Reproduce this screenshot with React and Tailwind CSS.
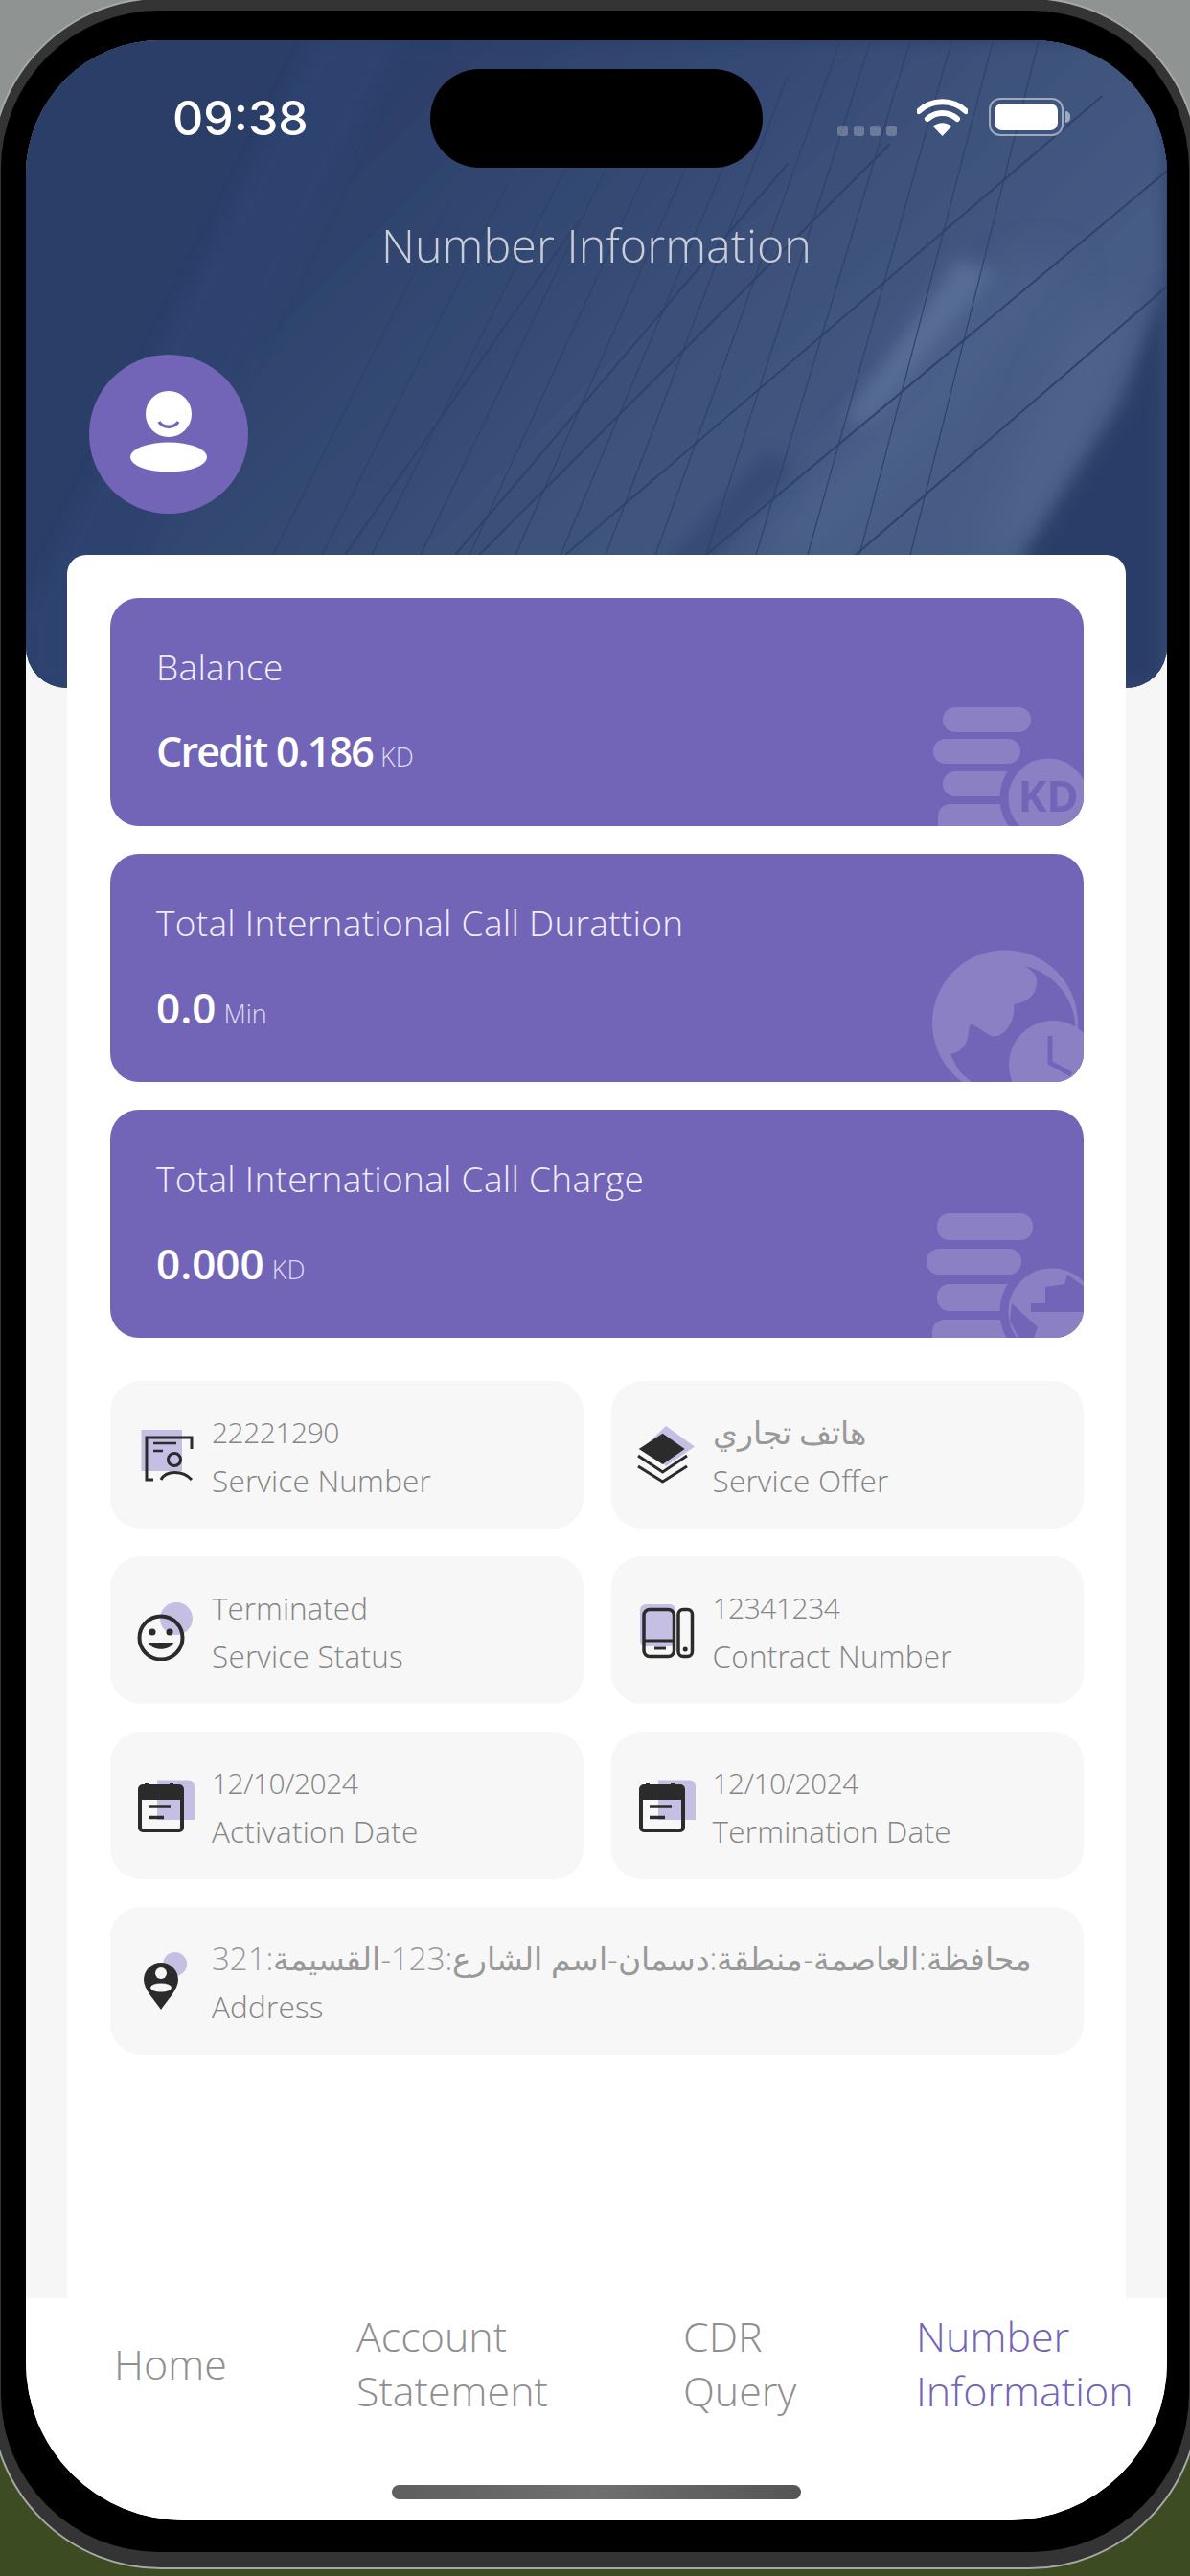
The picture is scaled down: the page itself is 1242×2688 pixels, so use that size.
const LILAC = "#c5bfe3";
const INK = "#2b2b2b";
const CARD_LIGHT = "#8c80c5";
const CARD_BG = "#7265b8";

// steep lines of the building facade, [x at y=579, slope, top y]
const thinLines = [
  [285, 0.5, 210], [336, 0.5, 190], [388, 0.5, 175], [439, 0.48, 165], [490, 0.46, 150], [538, 0.44, 130], [585, 0.42, 110],
  [632, 0.38, 80], [684, 0.36, 42], [737, 0.32, 42], [789, 0.3, 42], [843, 0.28, 42], [897, 0.26, 42], [950, 0.25, 42],
];
const thickLines = [
  [360, 0.7, 230], [475, 0.85, 170], [500, 1.0, 150], [590, 1.17, 100], [737, 1.2, 42], [893, 1.16, 42],
];

function HeaderBackdrop() {
  return (
    <svg className="absolute inset-0 h-full w-full" viewBox="27 42 1191 676" preserveAspectRatio="none">
      <defs>
        <linearGradient id="bgGrad" gradientUnits="userSpaceOnUse" x1="400" y1="60" x2="900" y2="560">
          <stop offset="0" stopColor="#2b3f69" />
          <stop offset="0.35" stopColor="#334872" />
          <stop offset="0.6" stopColor="#3b5079" />
          <stop offset="1" stopColor="#465c85" />
        </linearGradient>
        <filter id="soft" x="-30%" y="-30%" width="160%" height="160%">
          <feGaussianBlur stdDeviation="22" />
        </filter>
        <filter id="softer" x="-30%" y="-30%" width="160%" height="160%">
          <feGaussianBlur stdDeviation="9" />
        </filter>
      </defs>
      <rect x="27" y="42" width="1191" height="676" fill="#2a3e68" />
      <polygon points="60,718 420,42 1218,42 1218,718" fill="url(#bgGrad)" filter="url(#softer)" />
      <polygon points="27,718 27,640 330,42 420,42 90,718" fill="#2e4370" filter="url(#softer)" />
      <polygon points="1070,270 1120,280 860,579 790,579" fill="#4c628b" filter="url(#soft)" />
      <polygon points="1000,270 1040,285 910,440 880,440" fill="#566d95" filter="url(#softer)" />
      <polygon points="1130,330 1190,330 1090,579 1020,579" fill="#4e648c" filter="url(#soft)" />
      <polygon points="800,470 830,490 730,600 680,600" fill="#364b74" filter="url(#softer)" />
      <polygon points="1218,290 1218,720 1040,720 1070,575 1170,420" fill="#2a3d67" filter="url(#softer)" />
      {thinLines.map(([x, s, top]) => (
        <line key={x} x1={x} y1="579" x2={x + s * (579 - top)} y2={top} stroke="#2e426c" strokeWidth="1.2" />
      ))}
      {thickLines.map(([x, s, top]) => (
        <line key={x} x1={x} y1="579" x2={x + s * (579 - top)} y2={top} stroke="#2e426c" strokeWidth="2" />
      ))}
    </svg>
  );
}

function CoinsIcon() {
  return (
    <svg className="absolute bottom-0 right-0 h-[130px] w-[160px]" viewBox="0 0 160 130">
      <rect x="13" y="6" width="92" height="26" rx="13" fill={CARD_LIGHT} />
      <rect x="3" y="39" width="91" height="26" rx="13" fill={CARD_LIGHT} />
      <rect x="13" y="73" width="90" height="26" rx="13" fill={CARD_LIGHT} />
      <rect x="8" y="107" width="90" height="36" rx="13" fill={CARD_LIGHT} />
      <circle cx="123" cy="101" r="46" fill={CARD_LIGHT} stroke={CARD_BG} strokeWidth="9" />
      <text x="123" y="115" textAnchor="middle" fontSize="45" fontWeight="700" fill={CARD_BG} fontFamily="'Open Sans', sans-serif">KD</text>
    </svg>
  );
}

function GlobeClockIcon() {
  return (
    <svg className="absolute bottom-0 right-0 h-[150px] w-[180px]" viewBox="0 0 180 150">
      <circle cx="98" cy="88.5" r="76" fill={CARD_LIGHT} />
      <path
        d="M118 29C128 34 134 42 130 52C128 62 118 67 107 69C109 82 102 98 90 102C80 104 72 92 62 90C58 94 64 116 41 121C46 132 50 140 57 145A68 68 0 1 0 118 29Z"
        fill={CARD_BG}
      />
      <circle cx="148" cy="132" r="46" fill={CARD_LIGHT} />
      <path d="M145 102V130L167 142" fill="none" stroke={CARD_BG} strokeWidth="5" />
    </svg>
  );
}

function CoinsGlobeIcon() {
  return (
    <svg className="absolute bottom-0 right-0 h-[150px] w-[180px]" viewBox="0 0 180 150">
      <rect x="27" y="20" width="100" height="28" rx="13" fill={CARD_LIGHT} />
      <rect x="16" y="57" width="99" height="27" rx="13" fill={CARD_LIGHT} />
      <rect x="27" y="94" width="90" height="28" rx="13" fill={CARD_LIGHT} />
      <rect x="22" y="131" width="90" height="36" rx="13" fill={CARD_LIGHT} />
      <circle cx="147" cy="123" r="50" fill={CARD_LIGHT} stroke={CARD_BG} strokeWidth="9" />
      <path d="M105 114L132 139L128 150H112L103 132Z" fill={CARD_BG} />
      <path d="M163 84L180 96V123H125V114H140V97L160 94Z" fill={CARD_BG} />
    </svg>
  );
}

function IdIcon() {
  return (
    <svg viewBox="0 0 64 64" className="h-16 w-16 shrink-0">
      <rect x="7.5" y="6" width="42.5" height="43" fill={LILAC} />
      <path d="M20 58H13V14H60V26" fill="none" stroke={INK} strokeWidth="3" />
      <path d="M20 20H44M20 28H30" stroke={INK} strokeWidth="2.5" />
      <circle cx="42" cy="37" r="6.5" fill="none" stroke={INK} strokeWidth="3" />
      <path d="M28 58C33 48 51 48 60 58" fill="none" stroke={INK} strokeWidth="3" />
    </svg>
  );
}

function LayersIcon() {
  return (
    <svg viewBox="0 0 64 64" className="h-16 w-16 shrink-0">
      <path d="M32 2L62 23.5L32 44L10 23Z" fill={LILAC} />
      <path d="M3.8 26L28.6 9.8L51.7 26L28.6 42Z" fill={INK} />
      <path d="M3 33L28.6 50L54 33M3 44L28.6 60L54 44" fill="none" stroke={INK} strokeWidth="3" />
    </svg>
  );
}

function SmileIcon() {
  return (
    <svg viewBox="0 0 64 64" className="h-16 w-16 shrink-0">
      <circle cx="44" cy="20" r="17" fill={LILAC} />
      <circle cx="28" cy="40" r="22.5" fill="none" stroke={INK} strokeWidth="4" />
      <circle cx="19" cy="34" r="3.5" fill={INK} />
      <circle cx="37" cy="34" r="3.5" fill={INK} />
      <path d="M15 45H41C38 54 18 54 15 45Z" fill={INK} />
    </svg>
  );
}

function DevicesIcon() {
  return (
    <svg viewBox="0 0 64 64" className="h-16 w-16 shrink-0">
      <rect x="5" y="5" width="37" height="44" rx="6" fill={LILAC} />
      <rect x="9" y="10.4" width="31.5" height="49" rx="6" fill="none" stroke={INK} strokeWidth="3.5" />
      <path d="M9 43H40.5" stroke={INK} strokeWidth="3" />
      <path d="M20 51H32" stroke={INK} strokeWidth="3" />
      <rect x="45" y="10.4" width="14.5" height="49" rx="5" fill="none" stroke={INK} strokeWidth="3.5" />
      <circle cx="52.2" cy="52" r="2.5" fill={INK} />
    </svg>
  );
}

function CalendarIcon() {
  return (
    <svg viewBox="0 0 64 64" className="h-16 w-16 shrink-0">
      <path d="M24 5.5H57A6 6 0 0 1 63 11.5V47H24Z" fill={LILAC} />
      <rect x="6" y="12" width="44" height="46" rx="3" fill="none" stroke={INK} strokeWidth="4" />
      <rect x="6" y="12" width="44" height="14" fill={INK} />
      <path d="M13 8V14M39 8V14" stroke={INK} strokeWidth="4" />
      <path d="M15 33H38M15 44.5H31" stroke={INK} strokeWidth="3.5" />
    </svg>
  );
}

function PinIcon() {
  return (
    <svg viewBox="0 0 64 64" className="h-16 w-16 shrink-0">
      <circle cx="42.6" cy="14.5" r="12.5" fill={LILAC} />
      <path d="M28 13A18 18 0 0 1 46 31C46 41 34 53 28 62C22 53 10 41 10 31A18 18 0 0 1 28 13Z" fill={INK} />
      <circle cx="28" cy="24" r="6" fill="#f6f6f6" />
      <ellipse cx="28" cy="39" rx="11" ry="4.5" fill="#f6f6f6" />
    </svg>
  );
}

function InfoCard({ icon, value, label, valueClass = "text-[30px] tracking-[-0.5px]", className = "" }) {
  return (
    <div className={`flex h-[154px] items-center gap-[17px] rounded-[32px] bg-[#f7f7f7] pl-[25px] ${className}`}>
      {icon}
      <div className="min-w-0 pt-[4px] font-light leading-[50px] text-[#858585]">
        <div className={`whitespace-nowrap ${valueClass}`}>{value}</div>
        <div className="whitespace-nowrap text-[31.5px] tracking-[0.2px]">{label}</div>
      </div>
    </div>
  );
}

function StatCard({ title, value, unit, icon, valueClass = "text-[44px]" }) {
  return (
    <div className="relative h-[238px] overflow-hidden rounded-[30px] bg-[#7265b8] pl-[48px] pt-[48px] text-white">
      <div className="text-[37px] font-light leading-[48px] tracking-[0.3px] text-[#f1effa]">{title}</div>
      <div className="mt-[36px] flex items-baseline leading-[56px]">
        <span className={`font-semibold ${valueClass}`}>{value}</span>
        <span className="ml-[8px] text-[27px] font-light text-[#dedaf0]">{unit}</span>
      </div>
      {icon}
    </div>
  );
}

function StatusBar() {
  return (
    <div className="relative flex pl-[153px] pt-[30px]">
      <div className="flex h-[103px] w-[269px] items-center font-['Inter',sans-serif] text-[50px] font-medium text-white">09:38</div>
      <div className="h-[103px] w-[347px] rounded-full bg-black" />
      <div className="ml-[78px] flex h-[103px] w-[260px] items-center">
        <div className="mt-[26px] flex gap-[6px]">
          <span className="h-[11px] w-[11px] rounded-[3px] bg-white/25" />
          <span className="h-[11px] w-[11px] rounded-[3px] bg-white/25" />
          <span className="h-[11px] w-[11px] rounded-[3px] bg-white/25" />
          <span className="h-[11px] w-[11px] rounded-[3px] bg-white/25" />
        </div>
        <svg className="ml-[21px] mt-[-2px] h-[39px] w-[53px]" viewBox="0 0 53 39">
          <path d="M2 13C15 0 38 0 51 13" fill="none" stroke="white" strokeWidth="6" strokeLinecap="round" />
          <path d="M11 21C20 13 33 13 42 21" fill="none" stroke="white" strokeWidth="6" strokeLinecap="round" />
          <path d="M17 29C22 24 31 24 36 29L26.5 39Z" fill="white" />
        </svg>
        <div className="ml-[22px] mt-[-3px] flex items-center">
          <div className="h-[40px] w-[78px] rounded-[12px] border-[2px] border-white/50 p-[4px]">
            <div className="h-full w-full rounded-[8px] bg-white" />
          </div>
          <div className="ml-[2px] h-[12px] w-[5px] rounded-r-full bg-white/50" />
        </div>
      </div>
    </div>
  );
}

function NavItem({ lines, width, active }) {
  return (
    <div className={`shrink-0 text-[43px] font-light leading-[57px] ${active ? "text-[#7265b8]" : "text-[#8f8f8f]"} ${width}`}>
      {lines.map((l) => (
        <div key={l}>{l}</div>
      ))}
    </div>
  );
}

export default function App() {
  return (
    <div className="h-[2688px] w-[1242px] overflow-hidden bg-linear-to-b from-[#8f9493] from-5% via-[#4a5532] via-50% to-[#3d4b22] font-['Open_Sans','Noto_Sans',sans-serif]">
      <div className="ml-[-10px] mt-[-3px] h-[2684px] w-[1262px] rounded-[178px] border-[2px] border-[#a8a8a8] bg-[#343434] pb-[16px] pl-[9px] pr-[9px] pt-[12px]">
        <div className="h-full w-full rounded-[165px] bg-black pb-[33px] pl-[26px] pr-[23px] pt-[31px]">
          <div className="flex h-full w-full flex-col overflow-hidden rounded-b-[165px] rounded-t-[140px] bg-[#f6f6f6]">
            <div className="relative h-[676px] shrink-0 overflow-hidden rounded-b-[43px] bg-[#2a3e68]">
              <HeaderBackdrop />
              <StatusBar />
              <div className="relative mt-[50px] text-center text-[48.5px] font-light leading-[60px] text-[#c8cdd8]">Number Information</div>
              <div className="relative ml-[66px] mt-[85px] h-[166px] w-[166px] rounded-full bg-[#7265b8]">
                <svg className="h-[166px] w-[166px]" viewBox="0 0 166 166">
                  <circle cx="83" cy="62" r="24" fill="white" />
                  <path d="M73 70C77 77 89 77 93 70" fill="none" stroke="#7265b8" strokeWidth="3.5" />
                  <ellipse cx="83" cy="107" rx="40" ry="15.5" fill="white" />
                </svg>
              </div>
            </div>

            <div className="relative mx-[43px] mt-[-139px] h-[1819px] shrink-0 rounded-t-[20px] bg-white p-[45px] pr-[44px]">
              <div className="flex flex-col gap-[29px]">
                <StatCard title="Balance" value="Credit 0.186" unit="KD" valueClass="text-[43px] tracking-[-1.8px]" icon={<CoinsIcon />} />
                <StatCard title="Total International Call Durattion" value="0.0" unit="Min" icon={<GlobeClockIcon />} />
                <StatCard title="Total International Call Charge" value="0.000" unit="KD" icon={<CoinsGlobeIcon />} />
              </div>
              <div className="mt-[45px] grid grid-cols-2 gap-[29px]">
                <InfoCard icon={<IdIcon />} value="22221290" label="Service Number" />
                <InfoCard icon={<LayersIcon />} value="هاتف تجاري" valueClass="text-[33px] text-[#999999]" label="Service Offer" />
                <InfoCard icon={<SmileIcon />} value="Terminated" valueClass="text-[31.5px]" label="Service Status" />
                <InfoCard icon={<DevicesIcon />} value="12341234" label="Contract Number" />
                <InfoCard icon={<CalendarIcon />} value="12/10/2024" label="Activation Date" />
                <InfoCard icon={<CalendarIcon />} value="12/10/2024" label="Termination Date" />
                <InfoCard
                  className="col-span-2"
                  icon={<PinIcon />}
                  value="محافظة:العاصمة-منطقة:دسمان-اسم الشارع:123-القسيمة:321"
                  valueClass="text-[33px] text-[#999999]"
                  label="Address"
                />
              </div>
            </div>

            <div className="flex-1 bg-white">
              <div className="flex h-[136px] items-center pl-[92px]">
                <NavItem lines={["Home"]} width="w-[253px]" />
                <NavItem lines={["Account", "Statement"]} width="w-[341px]" />
                <NavItem lines={["CDR", "Query"]} width="w-[243px]" />
                <NavItem lines={["Number", "Information"]} width="w-[262px]" active />
              </div>
              <div className="mx-auto mt-[59px] h-[15px] w-[427px] rounded-full bg-linear-to-r from-[#5f5f5f] via-[#6f6f6f] to-[#555555]" />
            </div>
          </div>
        </div>
      </div>
    </div>
  );
}
